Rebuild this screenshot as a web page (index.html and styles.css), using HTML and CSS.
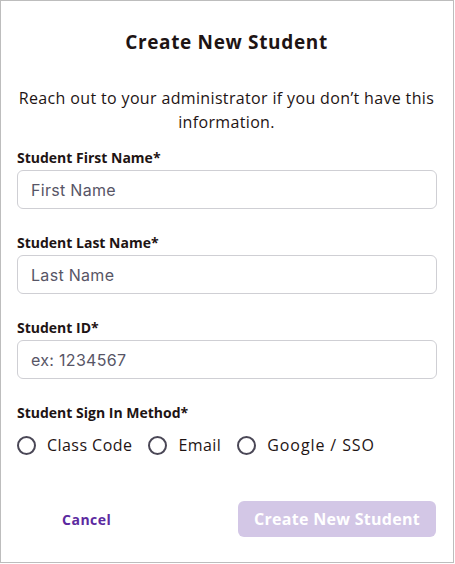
FILE: index.html
```html
<!DOCTYPE html>
<html lang="en">
<head>
<meta charset="utf-8">
<title>Create New Student</title>
<link rel="stylesheet" href="styles.css">
</head>
<body>
<div class="modal">
  <h1 class="title">Create New Student</h1>
  <p class="desc">Reach out to your administrator if you don’t have this information.</p>
  <div class="field">
    <label class="label" for="fn">Student First Name*</label>
    <input class="input" id="fn" type="text" placeholder="First Name">
  </div>
  <div class="field">
    <label class="label" for="ln">Student Last Name*</label>
    <input class="input" id="ln" type="text" placeholder="Last Name">
  </div>
  <div class="field">
    <label class="label" for="sid">Student ID*</label>
    <input class="input" id="sid" type="text" placeholder="ex: 1234567">
  </div>
  <div class="field method">
    <span class="label">Student Sign In Method*</span>
    <div class="radios">
      <label class="radio"><span class="circle"></span>Class Code</label>
      <label class="radio"><span class="circle"></span>Email</label>
      <label class="radio"><span class="circle"></span>Google / SSO</label>
    </div>
  </div>
  <div class="actions">
    <button class="cancel" type="button">Cancel</button>
    <button class="submit" type="button">Create New Student</button>
  </div>
</div>
</body>
</html>
```
FILE: styles.css
```css
html, body {
  margin: 0;
  padding: 0;
  background: #ffffff;
}
body {
  font-family: "Open Sans", "Noto Sans", sans-serif;
  color: #1e1414;
}
.modal {
  box-sizing: border-box;
  width: 454px;
  height: 563px;
  border: 1px solid #bdbdbd;
  padding: 27px 17px 0 16px;
  display: flex;
  flex-direction: column;
}
.title {
  margin: 0;
  font-size: 19px;
  line-height: 28px;
  font-weight: 700;
  letter-spacing: 0.65px;
  text-align: center;
}
.desc {
  margin: 30px 0 0;
  font-size: 16px;
  line-height: 24px;
  letter-spacing: 0.35px;
  text-align: center;
}
.field {
  display: flex;
  flex-direction: column;
  gap: 2px;
  margin-top: 24px;
}
.desc + .field {
  margin-top: 14px;
}
.label {
  font-size: 14px;
  line-height: 20px;
  font-weight: 700;
}
.input {
  box-sizing: border-box;
  width: 420px;
  height: 39px;
  border: 1px solid #cfcfd4;
  border-radius: 6px;
  padding: 0 13px;
  font-family: "Inter", "Roboto", sans-serif;
  font-size: 16px;
  letter-spacing: 0.3px;
  color: #1e1414;
  outline: none;
}
.input::placeholder {
  color: #575566;
}
.method {
  gap: 12px;
}
.radios {
  display: flex;
  align-items: center;
  gap: 16px;
}
.radio {
  display: flex;
  align-items: center;
  gap: 11px;
  font-size: 16px;
  line-height: 20px;
  letter-spacing: 0.45px;
}
.radio:last-child {
  letter-spacing: 0.9px;
}
.circle {
  box-sizing: border-box;
  width: 19px;
  height: 19px;
  border: 2px solid #4a4756;
  border-radius: 50%;
}
.actions {
  margin-top: 46px;
  display: flex;
  align-items: center;
  justify-content: space-between;
}
.cancel {
  border: 0;
  background: none;
  font-family: inherit;
  font-size: 14px;
  font-weight: 700;
  letter-spacing: 0.5px;
  color: #5b2aa0;
  padding: 0 0 0 45px;
}
.submit {
  box-sizing: border-box;
  width: 198px;
  height: 36px;
  border: 0;
  border-radius: 6px;
  background: #d3c7e6;
  color: #ffffff;
  font-family: inherit;
  font-size: 16px;
  font-weight: 700;
  letter-spacing: 0.3px;
}
```
